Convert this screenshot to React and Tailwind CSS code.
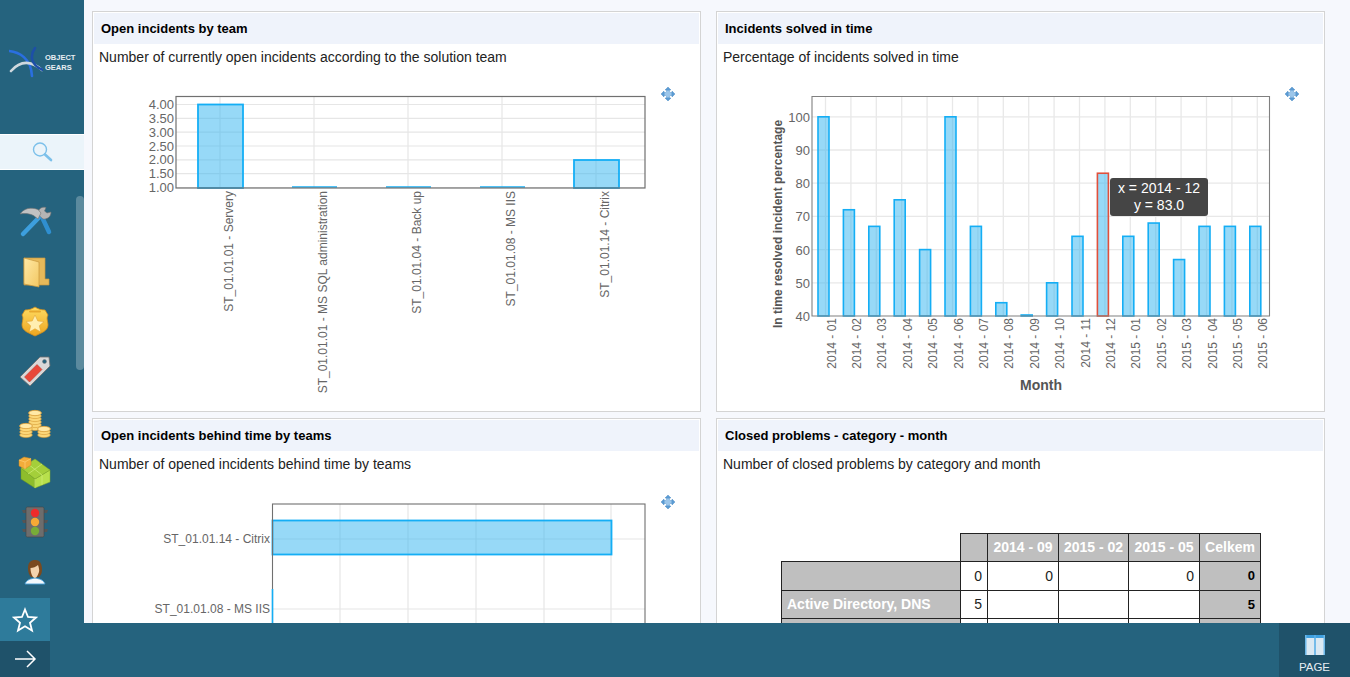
const Move = ({ x, y }) => (
  <g transform={`translate(${x} ${y})`} fill="#5b9bd3" stroke="#3f83c0" strokeWidth="0.4">
    <path d="M0 -7 L3 -4 L1.4 -4 L1.4 -1.4 L4 -1.4 L4 -3 L7 0 L4 3 L4 1.4 L1.4 1.4 L1.4 4 L3 4 L0 7 L-3 4 L-1.4 4 L-1.4 1.4 L-4 1.4 L-4 3 L-7 0 L-4 -3 L-4 -1.4 L-1.4 -1.4 L-1.4 -4 L-3 -4 Z" />
    <path d="M0 -4 L4 0 L0 4 L-4 0 Z" fill="#9cc6ea" stroke="none" />
  </g>
);

const labelStyle = { fontFamily: '"Liberation Sans", Arial, sans-serif' };

function Chart1() {
  const ys = [[104.5, '4.00'], [118.3, '3.50'], [132.2, '3.00'], [146, '2.50'], [159.8, '2.00'], [173.7, '1.50'], [187.5, '1.00']];
  const cols = [220, 314, 408, 502, 596];
  const labels = ['ST_01.01.01 - Servery', 'ST_01.01.01 - MS SQL administration', 'ST_01.01.04 - Back up', 'ST_01.01.08 - MS IIS', 'ST_01.01.14 - Citrix'];
  return (
    <svg width="605" height="340" viewBox="94 70 605 340" className="block" style={labelStyle}>
      {ys.map(([y]) => <line key={y} x1="176" x2="645" y1={y} y2={y} stroke="#e6e6e6" strokeWidth="1.2" />)}
      {cols.map((x) => <line key={x} x1={x} x2={x} y1="96" y2="188" stroke="#e6e6e6" strokeWidth="1.2" />)}
      <rect x="198" y="104.5" width="45" height="83.5" fill="#30b4f0" fillOpacity="0.5" stroke="#14aef5" strokeWidth="1.8" />
      <rect x="574" y="160" width="45" height="28" fill="#30b4f0" fillOpacity="0.5" stroke="#14aef5" strokeWidth="1.8" />
      {[292, 386, 480].map((x) => <line key={x} x1={x} x2={x + 45} y1="187" y2="187" stroke="#14aef5" strokeWidth="1.6" />)}
      <rect x="176" y="96.5" width="469" height="91.5" fill="none" stroke="#707070" strokeWidth="1.2" />
      {ys.map(([y, t]) => <text key={t} x="174" y={y + 4.5} textAnchor="end" fontSize="13" fill="#666">{t}</text>)}
      {labels.map((t, i) => (
        <text key={t} transform={`translate(${cols[i] + 13} 191) rotate(-90)`} textAnchor="end" fontSize="12" fill="#666">{t}</text>
      ))}
      <Move x={668} y={94} />
    </svg>
  );
}

function Chart2() {
  const months = ['2014 - 01','2014 - 02','2014 - 03','2014 - 04','2014 - 05','2014 - 06','2014 - 07','2014 - 08','2014 - 09','2014 - 10','2014 - 11','2014 - 12','2015 - 01','2015 - 02','2015 - 03','2015 - 04','2015 - 05','2015 - 06'];
  const vals = [100,72,67,75,60,100,67,44,40.3,50,64,83,64,68,57,67,67,67];
  const Y = (v) => 316 - (v - 40) * 3.32;
  return (
    <svg width="605" height="340" viewBox="718 70 605 340" className="block" style={labelStyle}>
      <defs>
        <clipPath id="ytitle"><rect x="765" y="96" width="30" height="240" /></clipPath>
      </defs>
      {[50,60,70,80,90,100].map((v) => <line key={v} x1="812" x2="1269" y1={Y(v)} y2={Y(v)} stroke="#e8e8e8" strokeWidth="1.3" />)}
      {months.map((m, i) => <line key={m} x1={825.5 + i * 25.4} x2={825.5 + i * 25.4} y1="96" y2="316" stroke="#e8e8e8" strokeWidth="1.3" />)}
      {vals.map((v, i) => (
        <rect key={i} x={818 + i * 25.4} y={Y(v)} width="11" height={316 - Y(v)} fill="#30b4f0" fillOpacity="0.5" stroke={i === 11 ? '#e0503c' : '#14aef5'} strokeWidth="1.6" />
      ))}
      <path d="M812 96.5 H1269.5 V316 H812 Z" fill="none" stroke="#808080" strokeWidth="1.1" />
      {[40,50,60,70,80,90,100].map((v) => <text key={v} x="810" y={Y(v) + 5} textAnchor="end" fontSize="13" fill="#666">{v}</text>)}
      {months.map((m, i) => (
        <text key={m} transform={`translate(${835.5 + i * 25.4} 318) rotate(-90)`} textAnchor="end" fontSize="12" fill="#666">{m}</text>
      ))}
      <g clipPath="url(#ytitle)">
        <text transform="translate(782 328) rotate(-90)" fontSize="12" fontWeight="700" fill="#555">In time resolved incident percentage</text>
      </g>
      <text x="1041" y="390" textAnchor="middle" fontSize="14" fontWeight="700" fill="#555">Month</text>
      <Move x={1292} y={94} />
    </svg>
  );
}

function Chart3() {
  return (
    <svg width="605" height="340" viewBox="94 476 605 340" className="block" style={labelStyle}>
      {[340, 408, 476, 544, 611].map((x) => <line key={x} x1={x} x2={x} y1="503" y2="700" stroke="#e6e6e6" strokeWidth="1.2" />)}
      {[538, 608].map((y) => <line key={y} x1="272" x2="645" y1={y} y2={y} stroke="#e6e6e6" strokeWidth="1.2" />)}
      <rect x="272.5" y="519.5" width="339" height="34" fill="#30b4f0" fillOpacity="0.5" stroke="#14aef5" strokeWidth="1.8" />
      <rect x="272.5" y="503" width="372.5" height="300" fill="none" stroke="#707070" strokeWidth="1.1" />
      <line x1="272.5" x2="272.5" y1="588" y2="660" stroke="#14aef5" strokeWidth="1.6" />
      <text x="270" y="542" textAnchor="end" fontSize="12" fill="#666">ST_01.01.14 - Citrix</text>
      <text x="270" y="612" textAnchor="end" fontSize="12" fill="#666">ST_01.01.08 - MS IIS</text>
      <Move x={668} y={501} />
    </svg>
  );
}

function Panel({ title, desc, children }) {
  return (
    <section className="relative h-[401px] overflow-hidden border border-[#d4d4d4] bg-white p-px">
      <h2 className="flex h-[31px] items-center bg-[#eff3fb] px-[7px] text-[13px] font-bold text-black">{title}</h2>
      <p className="flex h-[26px] items-center px-[5px] text-[14px] text-[#222]">{desc}</p>
      {children}
    </section>
  );
}

function PivotTable() {
  const th = 'border border-[#222] bg-[#bfbfbf] px-[5px] text-center text-[14px] font-bold text-white';
  const lab = 'border border-[#222] bg-[#bfbfbf] px-[5px] text-left text-[14px] font-bold text-white';
  const td = 'border border-[#222] bg-white px-[5px] text-right text-[14px] text-[#222]';
  const tot = 'border border-[#222] bg-[#bfbfbf] px-[5px] text-right text-[13px] font-bold text-black';
  return (
    <div className="ml-[63px] mt-[56px]">
      <table className="w-[479px] table-fixed border-collapse">
        <colgroup>
          <col className="w-[179px]" /><col className="w-[27px]" /><col className="w-[71px]" /><col className="w-[70px]" /><col className="w-[71px]" /><col className="w-[61px]" />
        </colgroup>
        <tbody>
          <tr className="h-[28px]">
            <td className="border-0 bg-white"></td>
            <th className={th}></th>
            <th className={th + ' whitespace-nowrap'}>2014 - 09</th>
            <th className={th + ' whitespace-nowrap'}>2015 - 02</th>
            <th className={th + ' whitespace-nowrap'}>2015 - 05</th>
            <th className={th}>Celkem</th>
          </tr>
          <tr className="h-[29px]">
            <th className={lab}></th><td className={td}>0</td><td className={td}>0</td><td className={td}></td><td className={td}>0</td><td className={tot}>0</td>
          </tr>
          <tr className="h-[28px]">
            <th className={lab}>Active Directory, DNS</th><td className={td}>5</td><td className={td}></td><td className={td}></td><td className={td}></td><td className={tot}>5</td>
          </tr>
          <tr className="h-[28px]">
            <th className={lab}></th><td className={td}></td><td className={td}></td><td className={td}></td><td className={td}></td><td className={tot}></td>
          </tr>
        </tbody>
      </table>
    </div>
  );
}

const ToolsIcon = () => (
  <svg width="34" height="34" viewBox="0 0 34 34">
    <path d="M24 12 L31 27" stroke="#2f8fd0" strokeWidth="4.5" strokeLinecap="round" />
    <path d="M28 2.5 C23 1 18.5 5 21 10.5 L25 14 C29 14.5 33 12 33 7 L29 8 L26.5 6 Z" fill="#b4b4b4" stroke="#707070" strokeWidth="0.6" />
    <path d="M20.5 13 L5 29" stroke="#3d9fde" strokeWidth="4.5" strokeLinecap="round" />
    <path d="M2 9 C6 3 13 2 20 4.5 L23 8 L20 14 L15.5 10.5 C11 8.5 7 8 2 9 Z" fill="#c2c2c2" stroke="#6e6e6e" strokeWidth="0.6" />
  </svg>
);
const FolderIcon = () => (
  <svg width="34" height="34" viewBox="0 0 34 34">
    <defs><linearGradient id="fold" x1="0" y1="0" x2="1" y2="1"><stop offset="0" stopColor="#ffe9a6" /><stop offset="1" stopColor="#f3c863" /></linearGradient></defs>
    <path d="M6 3 H27 V24 L31 24 V30 H6 Z" fill="#e6b95a" stroke="#c9983e" strokeWidth="0.7" />
    <path d="M6 3 L21 7 V32 L6 29 Z" fill="url(#fold)" stroke="#c9983e" strokeWidth="0.7" />
  </svg>
);
const BadgeIcon = () => (
  <svg width="34" height="34" viewBox="0 0 34 34">
    <defs><linearGradient id="bdg" x1="0" y1="0" x2="0" y2="1"><stop offset="0" stopColor="#ffdc62" /><stop offset="1" stopColor="#eda51f" /></linearGradient></defs>
    <path d="M7 5 C11 5 14 4 17 2 C20 4 23 5 27 5 L30 10 C28 13 30 17 30 20 C30 26 23 28 17 31 C11 28 4 26 4 20 C4 17 6 13 4 10 Z" fill="url(#bdg)" stroke="#d18d1c" strokeWidth="0.8" />
    <path d="M17 10 L19.8 16 L26 16.6 L21.3 20.8 L22.8 27 L17 23.7 L11.2 27 L12.7 20.8 L8 16.6 L14.2 16 Z" fill="#ffeeb0" stroke="#dc9f30" strokeWidth="0.5" />
    <rect x="11" y="5.5" width="12" height="2" rx="1" fill="#e8a92e" />
  </svg>
);
const TagIcon = () => (
  <svg width="34" height="34" viewBox="0 0 34 34">
    <path d="M22 2 L31 2 L32 11 L12 31 L2 22 Z" fill="#d8d8d8" stroke="#6f6f6f" strokeWidth="0.8" />
    <path d="M19 9.5 L24 14.5 L11.5 27 L6.5 22 Z" fill="#e8483a" stroke="#b73327" strokeWidth="0.5" />
    <circle cx="26.5" cy="6.5" r="2" fill="#25637e" stroke="#777" strokeWidth="0.5" />
  </svg>
);
const Coin = ({ x, y, n }) => (
  <g>
    {Array.from({ length: n }).map((_, i) => (
      <g key={i}>
        <ellipse cx={x} cy={y - i * 3} rx="6.3" ry="2.6" fill="#fbd779" stroke="#d79a35" strokeWidth="0.6" />
      </g>
    ))}
    <ellipse cx={x} cy={y - (n - 1) * 3} rx="6.3" ry="2.6" fill="#ffe9a6" stroke="#d79a35" strokeWidth="0.6" />
  </g>
);
const CoinsIcon = () => (
  <svg width="34" height="34" viewBox="0 0 34 34">
    <Coin x={17} y={23} n={6} />
    <Coin x={8} y={30} n={4} />
    <Coin x={26} y={30} n={3} />
  </svg>
);
const CubesIcon = () => (
  <svg width="34" height="34" viewBox="0 0 34 34">
    <path d="M3 13 L17 24 V33 L3 24 Z" fill="#8ebd2c" stroke="#6c9c1c" strokeWidth="0.5" />
    <path d="M17 24 L32 15 V27 L17 33 Z" fill="#b8e04c" stroke="#86ad25" strokeWidth="0.5" />
    <path d="M3 13 L17 4 L32 15 L17 24 Z" fill="#a4cf3a" stroke="#86ad25" strokeWidth="0.5" />
    <path d="M10 9 L24 20 M17 24 V33 M24 9 L10 19 M24 20 V30" stroke="#d0ee7a" strokeWidth="0.7" fill="none" />
    <path d="M1 5 L6 2 L13 3.5 L13 10 L7 14 L1 11 Z" fill="#f2ac3a" stroke="#c98721" strokeWidth="0.5" />
    <path d="M1 5 L7 7 L13 3.5 M7 7 V14" fill="none" stroke="#ffd57f" strokeWidth="0.6" />
  </svg>
);
const LightIcon = () => (
  <svg width="34" height="34" viewBox="0 0 34 34">
    <path d="M4 5 H9 L9 8 H5 Z M4 15 H9 V18 H5 Z M4 24 H9 V27 H5 Z M30 5 H25 V8 H29 Z M30 15 H25 V18 H29 Z M30 24 H25 V27 H29 Z" fill="#555" />
    <rect x="8" y="2" width="18" height="30" rx="1.5" fill="#6d6d6d" stroke="#444" strokeWidth="0.6" />
    <circle cx="17" cy="8" r="4.2" fill="#ee2b2b" />
    <circle cx="17" cy="17" r="4.2" fill="#f6a935" />
    <circle cx="17" cy="26" r="4.2" fill="#78ac38" />
  </svg>
);
const PersonIcon = () => (
  <svg width="34" height="34" viewBox="0 0 34 34">
    <path d="M7 29 C9 24 13 24 17 23 C21 24 25 24 27 29 Z" fill="#f3f8fc" stroke="#4aa0d8" strokeWidth="0.9" />
    <path d="M10 13 C10 6 14 5 17.5 5 C22 5 24 9 24 15 C24 19 22 21 21 22 H13 C11 20 10 17 10 13 Z" fill="#7a4a1f" />
    <path d="M12.5 13 C15 13 18 12 20 10 C21 13 21.5 15 21 17 C20 20 18.5 23 17 23 C15 23 12.5 19 12.5 13 Z" fill="#f3d3ad" />
  </svg>
);

const Logo = () => (
  <svg width="34" height="34" viewBox="0 0 34 34" className="shrink-0">
    <path d="M1 7 C11 8 23 14 24 32" transform="translate(-1 -2)" fill="none" stroke="#2a6fe0" strokeWidth="2.6" strokeLinecap="round" />
    <path d="M1 25 C9 16 19 13 32 24" transform="translate(1 0)" fill="none" stroke="#cfd8de" strokeWidth="2.6" strokeLinecap="round" />
    <path d="M27 2 C22 9 22 19 35 24" transform="translate(-1 0)" fill="none" stroke="#1d4fa8" strokeWidth="2.6" strokeLinecap="round" />
  </svg>
);

export default function App() {
  const icons = [ToolsIcon, FolderIcon, BadgeIcon, TagIcon, CoinsIcon, CubesIcon, LightIcon, PersonIcon];
  return (
    <div className="relative flex h-[677px] w-[1350px] flex-col overflow-hidden bg-[#f6f8fd]" style={{ fontFamily: '"Liberation Sans", Arial, sans-serif' }}>
      <div className="flex h-[623px] min-h-0">
        <aside className="relative flex w-[84px] shrink-0 flex-col bg-[#25637e]">
          <div className="flex h-[134px] items-center gap-[2px] pl-[9px] pb-[8px] pt-[0px]">
            <Logo />
            <div className="text-[7.5px] font-bold leading-[10px] text-[#e8eef2]">OBJECT<br />GEARS</div>
          </div>
          <div className="flex h-[36px] items-center justify-center border-y border-white bg-[#ebf4fa]">
            <svg width="24" height="24" viewBox="0 0 24 24" fill="none">
              <circle cx="10" cy="9.5" r="6.5" stroke="#7cc0ea" strokeWidth="1.4" />
              <path d="M15 14.5 L21 20" stroke="#7cc0ea" strokeWidth="2.6" strokeLinecap="round" />
            </svg>
          </div>
          <div className="flex w-[70px] flex-col pt-[27px]">
            {icons.map((I, i) => (
              <div key={i} className="flex h-[50px] items-center justify-center"><I /></div>
            ))}
          </div>
          <div className="absolute left-[76px] top-[196px] h-[174px] w-[8px] rounded-full bg-white/25"></div>
        </aside>
        <main className="min-w-0 flex-1 pl-[8px] pt-[11px]">
          <div className="grid w-[1233px] grid-cols-[609px_609px] gap-x-[15px] gap-y-[6px]">
            <Panel title="Open incidents by team" desc="Number of currently open incidents according to the solution team"><Chart1 /></Panel>
            <Panel title="Incidents solved in time" desc="Percentage of incidents solved in time">
              <Chart2 />
              <div className="absolute left-[393px] top-[166px] w-[98px] rounded-[3px] bg-[#454545] py-[2px] text-center text-[14px] leading-[17px] text-white">
                x = 2014 - 12<br />y = 83.0
              </div>
            </Panel>
            <Panel title="Open incidents behind time by teams" desc="Number of opened incidents behind time by teams"><Chart3 /></Panel>
            <Panel title="Closed problems - category - month" desc="Number of closed problems by category and month"><PivotTable /></Panel>
          </div>
        </main>
      </div>
      <footer className="relative z-10 flex h-[54px] shrink-0 justify-end bg-[#25637e]">
        <div className="flex w-[71px] flex-col items-center justify-end bg-[#1f526a] pb-[2px]">
          <svg width="20" height="20" viewBox="0 0 20 20">
            <rect x="0" y="0" width="20" height="20" fill="#dbe9f3" />
            <rect x="0" y="0" width="20" height="3" fill="#3fa0e0" />
            <rect x="0" y="0" width="1.5" height="20" fill="#6db8e8" />
            <rect x="18.5" y="0" width="1.5" height="20" fill="#6db8e8" />
            <rect x="9.2" y="0" width="1.6" height="20" fill="#5cb0e6" />
          </svg>
          <span className="mt-[4px] text-[11.5px] leading-[16px] text-[#e6eef3]">PAGE</span>
        </div>
      </footer>
      <div className="absolute left-0 top-[598px] z-20 flex h-[43px] w-[50px] items-center justify-center bg-[#2e7b9b]">
        <svg width="26" height="26" viewBox="0 0 26 26" fill="none">
          <path d="M13 2.5 L16 10 L24 10.5 L18 15.8 L20 23.5 L13 19.3 L6 23.5 L8 15.8 L2 10.5 L10 10 Z" stroke="#fff" strokeWidth="1.8" strokeLinejoin="miter" />
        </svg>
      </div>
      <div className="absolute left-0 top-[641px] z-20 flex h-[36px] w-[50px] items-center justify-center bg-[#1f526a]">
        <svg width="24" height="20" viewBox="0 0 24 20" fill="none">
          <path d="M2 10 H22 M14 2 L22 10 L14 18" stroke="#fff" strokeWidth="1.5" />
        </svg>
      </div>
    </div>
  );
}
